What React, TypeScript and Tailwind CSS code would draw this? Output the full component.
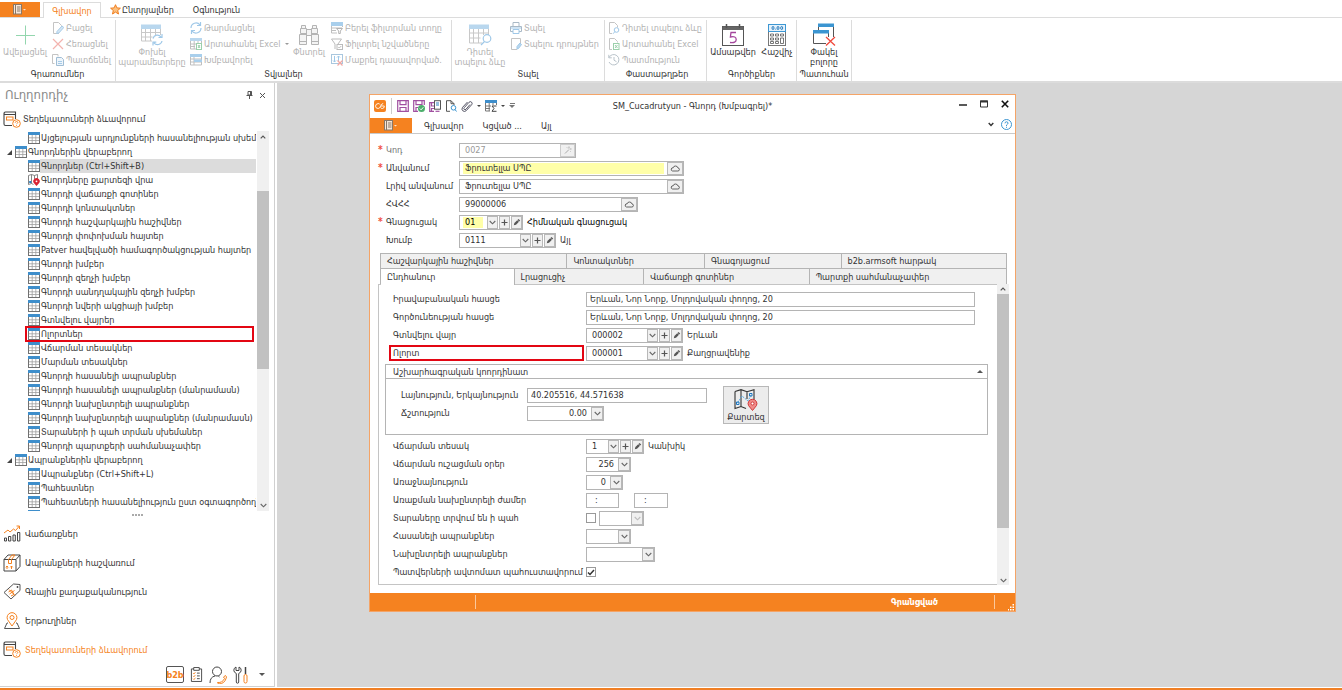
import React from "react";
import type { ReactNode } from "react";

type IconProps = { w: number; h: number; vb: string; children: ReactNode; className?: string };

function Icon({ w, h, vb, children, className = "" }: IconProps) {
  return (
    <svg width={w} height={h} viewBox={vb} fill="none" aria-hidden="true" className={"shrink-0 " + className}>
      {children}
    </svg>
  );
}

/* ---------- shared icons ---------- */

const FileMenuIcon = () => (
  <Icon w={14} h={11} vb="0 0 14 11">
    <rect x="0.5" y="0.5" width="8" height="9.5" fill="#f6e6d8" stroke="#8a7868" />
    <path d="M2.5 0.5v9.5" stroke="#8a7868" />
    <path d="M4 3h3.5M4 5h3.5M4 7h3.5" stroke="#8a7868" />
    <path d="M10 5h3l-1.500 1.500z" fill="#fde3cc" />
  </Icon>
);

const TableIcon = () => (
  <Icon w={12} h={12} vb="0 0 12 12">
    <rect x="0.5" y="0.5" width="11" height="11" fill="#fff" stroke="#707070" />
    <path d="M4.2 3v8M7.8 3v8M1 5.800h10M1 8.500h10" stroke="#a0a0a0" strokeWidth="0.8" />
    <rect x="0" y="0" width="12" height="3" fill="#3e8ecb" />
  </Icon>
);

const MapPinIcon = () => (
  <Icon w={12} h={12} vb="0 0 12 12">
    <path d="M0.5 1.5l3-1 3 1 3-1v5M0.5 1.5v9l3-1 2 1M3.5 0.5v9M6.5 1.5v4" stroke="#777" strokeWidth="0.9" />
    <rect x="1.2" y="7" width="2" height="2" fill="#2a7fc4" />
    <path d="M8.500 12l-2.500-2.700a3.200 3.200 0 1 1 5 0z" fill="#d92332" />
    <circle cx="8.500" cy="7.300" r="0.900" fill="#fff" />
  </Icon>
);

const BookIcon = () => (
  <Icon w={18} h={17} vb="0 0 18 17">
    <path d="M12.500 8V3.500H2.500Q1 3.500 1 2.300T2.500 1h10v2.500M1 2.500V13q0 1.500 1.500 1.500H9" stroke="#444" strokeWidth="1.100" />
    <rect x="3.500" y="6" width="6.500" height="3" stroke="#f58220" />
    <circle cx="13.500" cy="12.500" r="3.800" fill="#fff" stroke="#f58220" />
    <path d="M12.200 11.700q0-1.200 1.300-1.200t1.300 1q0 .7-1.300 1.400M13.500 14v.8" stroke="#f58220" strokeWidth="0.900" />
  </Icon>
);

/* ---------- ribbon icons ---------- */

const PlusBig = () => (
  <Icon w={20} h={22} vb="0 0 20 22"><path d="M10.500 1.500v19M1 11.500h19" stroke="#93d6ae" /></Icon>
);

const ChangeIcon = () => (
  <Icon w={24} h={22} vb="0 0 24 22">
    <path d="M1.500 5v12H12M20.500 5v6M5.500 5v12M10.500 5v12M15.500 5v6M1.500 8.500h19M1.500 13h11" stroke="#c8c8c8" />
    <rect x="1" y="0.500" width="20" height="4.500" fill="#b9d7ee" />
    <path d="M13 14.500a4.500 4.500 0 0 1 8-1.500M22 10v3.500h-3.500M22 17a4.500 4.500 0 0 1-8 1.800M13 21.500v-3.300h3.300" stroke="#9fc8e8" strokeWidth="1.200" />
  </Icon>
);

const FindIcon = () => (
  <Icon w={22} h={22} vb="0 0 22 22">
    <path d="M3.500 4V1.500h4V4M14.500 4V1.500h4V4M2.500 4.500h6v5h-6zM13.500 4.500h6v5h-6zM8.500 5.500h5v6h-5zM1.500 10.500h7v10h-7zM13.500 10.500h7v10h-7zM1.500 17.500h7M13.500 17.500h7" fill="#f4f4f4" stroke="#b4b4b4" />
  </Icon>
);

const PreviewIcon = () => (
  <Icon w={24} h={22} vb="0 0 24 22">
    <path d="M1.500 5v14H14M20.500 5v6M5.500 5v14M10.500 5v14M15.500 5v6M1.500 9h19M1.500 14h11" stroke="#c8c8c8" />
    <rect x="1" y="0.500" width="20" height="4.500" fill="#b9d7ee" />
    <circle cx="19" cy="14.500" r="3.800" fill="#fff" stroke="#9fc8e8" strokeWidth="1.200" />
    <path d="M16.500 17.500L13 21" stroke="#9fc8e8" strokeWidth="1.300" />
  </Icon>
);

const CalendarIcon = () => (
  <Icon w={22} h={22} vb="0 0 22 22">
    <rect x="0.500" y="2.500" width="21" height="19" fill="#fff" stroke="#555" />
    <rect x="0.500" y="2.500" width="21" height="3.500" fill="#666" />
    <path d="M4.500 0v4M17.500 0v4" stroke="#555" strokeWidth="1.500" />
    <path d="M14 8.500H9L8.400 13q5.800-1.300 5.800 2.500T8 18.500" stroke="#a4459c" strokeWidth="1.300" />
  </Icon>
);

const CalculatorIcon = () => (
  <Icon w={18} h={22} vb="0 0 18 22">
    <rect x="0.500" y="0.500" width="17" height="21" fill="#fff" stroke="#777" />
    <rect x="0.500" y="0.500" width="17" height="7" fill="#e5f2fb" stroke="#3d97d3" />
    <ellipse cx="5" cy="4" rx="1" ry="1.600" stroke="#2f7fbf" />
    <path d="M7.300 5.200h.8" stroke="#2f7fbf" />
    <ellipse cx="10" cy="4" rx="1" ry="1.600" stroke="#2f7fbf" />
    <ellipse cx="13.700" cy="4" rx="1" ry="1.600" stroke="#2f7fbf" />
    <path d="M2.500 10h3v2h-3zM7.500 10h3v2h-3zM12.500 10h3v2h-3zM2.500 14h3v2h-3zM7.500 14h3v2h-3zM12.500 14h3v5.500h-3zM2.500 17.500h3v2h-3zM7.500 17.500h3v2h-3z" stroke="#666" strokeWidth="0.900" />
  </Icon>
);

const CloseAllIcon = () => (
  <Icon w={24} h={24} vb="0 0 24 24">
    <path d="M6.500 7V1.500h15V14" stroke="#555" fill="#fff" />
    <rect x="6" y="0.500" width="16" height="3.500" fill="#3b95d1" />
    <path d="M14 20.500H1.500v-12h15V14" fill="#fff" stroke="#555" />
    <rect x="1" y="7" width="16" height="3.500" fill="#3b95d1" />
    <path d="M14 14l9 8.500M23 14l-9 8.500" stroke="#f04a3e" strokeWidth="1.300" />
  </Icon>
);

const smallIcons: Record<string, ReactNode> = {
  open: (
    <>
      <path d="M7 11.500H1.500V.5h5l3 3v2" stroke="#c4c4c4" />
      <path d="M5 9.500l5-5.500 1.800 1.500-5 5.500-2 .5z" fill="#d5e7f5" stroke="#a5cbe8" />
    </>
  ),
  remove: <path d="M1 1l10 10M11 1L1 11" stroke="#f3b3ae" strokeWidth="1.200" />,
  copy: (
    <>
      <path d="M2.500 9.500h-2V.5H6v2" stroke="#c4c4c4" />
      <path d="M4.500 3.500h5l2 2v6h-7z" fill="#eef5fb" stroke="#a0bdd4" />
      <path d="M6 7.500h4M6 9.500h4" stroke="#a5cbe8" />
    </>
  ),
  refresh: <path d="M1 6a5 5 0 0 1 9-3M10.500 0v3.500H7M11 6a5 5 0 0 1-9 3M1.500 12V8.500H5" stroke="#9fc8e8" strokeWidth="1.200" />,
  excelTable: (
    <>
      <path d="M.5 2v9H6M11.500 2v3M4.200 3v8M8 3v2M1 6h5M1 8.500h4" stroke="#bfbfbf" />
      <rect x="0" y="0" width="12" height="3" fill="#b9d7ee" />
      <rect x="6.500" y="5.500" width="5" height="6" fill="#fff" stroke="#9bd0ab" />
      <path d="M8 7l2 3M10 7L8 10" stroke="#9bd0ab" />
    </>
  ),
  group: (
    <>
      <path d="M.5 1v10h11V1M.5 5h11M.5 8h11M4 1v10" stroke="#bfbfbf" />
      <rect x="0" y="0" width="12" height="3" fill="#a9cfec" />
      <rect x="4" y="5.500" width="8" height="2.500" fill="#a9cfec" />
    </>
  ),
  filterRow: (
    <>
      <path d="M.5 2v9H6M11.500 2v3M1 6h10M1 8.500h4" stroke="#bfbfbf" />
      <rect x="0" y="0" width="12" height="4" fill="#a9cfec" />
      <path d="M5.500 6.500h6L9.300 9v2.500H7.700V9z" fill="#fff" stroke="#b4b4b4" />
    </>
  ),
  filterMark: (
    <>
      <path d="M7 6l3.500-5H.5L4 6v5" stroke="#bbb" />
      <rect x="6" y="6.500" width="5.500" height="5" fill="#fff" stroke="#bbb" />
      <path d="M7.300 9l1 1 2-2" stroke="#bbb" />
    </>
  ),
  clearSort: (
    <>
      <rect x="0.500" y="0.500" width="11" height="9" stroke="#a9c7de" />
      <path d="M3.500 2v6M2 6.500L3.500 8 5 6.500M7.500 8V2M6 3.500L7.500 2 9 3.500" stroke="#9fc8e8" />
      <path d="M6.500 6.500l5 5M11.500 6.500l-5 5" stroke="#f3a7a2" strokeWidth="1.200" />
    </>
  ),
  print: (
    <>
      <path d="M3 4V.5h6V4M3 9.500H.5v-5h11v5H9" stroke="#a9b9c6" />
      <path d="M3 7.500h6v4H3zM1 6h10" stroke="#9fc8e8" />
    </>
  ),
  printSetup: (
    <>
      <path d="M7 11.500H1.500V.5h9v5" stroke="#c4c4c4" />
      <path d="M7 11V8.500l3-3.500 1.500 1.500-3 4z" fill="#b9d7ee" stroke="#9fc8e8" />
    </>
  ),
  docView: (
    <>
      <path d="M4 11.500H1.500V.5h5l3 3v2" stroke="#c4c4c4" />
      <circle cx="8.500" cy="8" r="2.300" stroke="#9fc8e8" />
      <path d="M7 9.500L5 11.800" stroke="#9fc8e8" />
    </>
  ),
  docExcel: (
    <>
      <path d="M4 11.500H1.500V.5h5l3 3v1" stroke="#c4c4c4" />
      <rect x="5.500" y="5.500" width="5.500" height="6" fill="#fff" stroke="#9bd0ab" />
      <path d="M7 7l2.500 3M9.500 7L7 10" stroke="#9bd0ab" />
    </>
  ),
  history: (
    <>
      <path d="M1 3.500A5.200 5.200 0 1 1 1 8M.8.8v3h3" stroke="#b9c3ca" />
      <path d="M6 3v3.200l2.500 1.500" stroke="#b9c3ca" />
    </>
  ),
};

function SmallButton({ icon, label, caret }: { icon: string; label: string; caret?: boolean }) {
  return (
    <button type="button" disabled className="flex h-4 items-center gap-[2px] whitespace-nowrap text-[#b2b2b2]">
      <Icon w={12} h={12} vb="0 0 12 12">{smallIcons[icon]}</Icon>
      <span>{label}</span>
      {caret && <span className="ml-[2px] border-x-2 border-t-2 border-x-transparent border-t-[#999]" />}
    </button>
  );
}

function BigButton({ icon, lines, disabled, className = "" }: { icon: ReactNode; lines: string[]; disabled?: boolean; className?: string }) {
  return (
    <button
      type="button"
      disabled={disabled}
      className={"flex flex-col items-center whitespace-nowrap pt-[2px] leading-[10px] " + (disabled ? "text-[#b2b2b2] " : "text-[#333] ") + className}
    >
      <span className="flex h-[25px] items-center justify-center">{icon}</span>
      {lines.map((l) => <span key={l}>{l}</span>)}
    </button>
  );
}

function RibbonGroup({ label, children, className = "" }: { label: string; children: ReactNode; className?: string }) {
  return (
    <section aria-label={label} className={"mt-[2px] flex flex-col border-r border-[#dcdcdc] " + className}>
      <div className="flex h-12 items-start">{children}</div>
      <div className="h-[13px] text-center leading-[13px] text-[#333]">{label}</div>
    </section>
  );
}

function Ribbon() {
  return (
    <header className="shrink-0 bg-white">
      <nav className="flex h-[18px] items-stretch border-b border-[#dcdcdc] pt-[2px]">
        <button type="button" aria-label="Մենյու" className="flex w-10 items-center justify-center bg-[#f58220]"><FileMenuIcon /></button>
        <button type="button" className="-mb-px ml-[3px] w-[58px] border border-b-0 border-[#dcdcdc] bg-white text-[#f58220]">Գլխավոր</button>
        <button type="button" className="ml-[9px] flex items-center gap-px text-[#333]">
          <Icon w={11} h={11} vb="0 0 11 11">
            <path d="M5.500.7l1.400 3.200 3.500.3-2.700 2.300.8 3.500-3-1.900-3 1.900.8-3.500L.6 4.200l3.500-.3z" fill="#fbc07e" stroke="#f07c1c" />
          </Icon>
          Ընտրյալներ
        </button>
        <button type="button" className="ml-[19px] text-[#333]">Օգնություն</button>
      </nav>
      <div className="flex h-[65px] border-b-2 border-[#dcdcdc]">
        <RibbonGroup label="Գրառումներ" className="w-[116px]">
          <BigButton disabled icon={<PlusBig />} lines={["Ավելացնել"]} className="w-[50px]" />
          <div className="ml-[2px]">
            <SmallButton icon="open" label="Բացել" />
            <SmallButton icon="remove" label="Հեռացնել" />
            <SmallButton icon="copy" label="Պատճենել" />
          </div>
        </RibbonGroup>
        <RibbonGroup label="Տվյալներ" className="w-[336px]">
          <BigButton disabled icon={<ChangeIcon />} lines={["Փոխել", "պարամետրերը"]} className="w-[72px]" />
          <div className="ml-[2px] w-[101px]">
            <SmallButton icon="refresh" label="Թարմացնել" />
            <SmallButton icon="excelTable" label="Արտահանել Excel" caret />
            <SmallButton icon="group" label="Խմբավորել" />
          </div>
          <BigButton disabled icon={<FindIcon />} lines={["Փնտրել"]} className="w-9" />
          <div className="ml-1">
            <SmallButton icon="filterRow" label="Բերել ֆիլտրման տողը" />
            <SmallButton icon="filterMark" label="Ֆիլտրել նշվածները" />
            <SmallButton icon="clearSort" label="Մաքրել դասավորված." />
          </div>
        </RibbonGroup>
        <RibbonGroup label="Տպել" className="w-[153px]">
          <BigButton disabled icon={<PreviewIcon />} lines={["Դիտել", "տպելու ձևը"]} className="w-[56px]" />
          <div className="ml-[2px]">
            <SmallButton icon="print" label="Տպել" />
            <SmallButton icon="printSetup" label="Տպելու դրույթներ" />
          </div>
        </RibbonGroup>
        <RibbonGroup label="Փաստաթղթեր" className="w-[102px] pl-[3px]">
          <div>
            <SmallButton icon="docView" label="Դիտել տպելու ձևը" />
            <SmallButton icon="docExcel" label="Արտահանել Excel" />
            <SmallButton icon="history" label="Պատմություն" />
          </div>
        </RibbonGroup>
        <RibbonGroup label="Գործիքներ" className="w-[90px]">
          <BigButton icon={<CalendarIcon />} lines={["Ամսաթվեր"]} className="w-[52px]" />
          <BigButton icon={<CalculatorIcon />} lines={["Հաշվիչ"]} className="w-[36px]" />
        </RibbonGroup>
        <RibbonGroup label="Պատուհան" className="w-[55px]">
          <BigButton icon={<CloseAllIcon />} lines={["Փակել", "բոլորը"]} className="w-[54px]" />
        </RibbonGroup>
      </div>
    </header>
  );
}

/* ---------- navigator ---------- */

type TreeItem = { label: string; parent?: boolean; selected?: boolean; map?: boolean; marked?: boolean };

const tree: TreeItem[] = [
  { label: "Այցելության արդյունքների հասանելիության սխեմաներ" },
  { label: "Գնորդներին վերաբերող", parent: true },
  { label: "Գնորդներ (Ctrl+Shift+B)", selected: true },
  { label: "Գնորդները քարտեզի վրա", map: true },
  { label: "Գնորդի վաճառքի գոտիներ" },
  { label: "Գնորդի կոնտակտներ" },
  { label: "Գնորդի հաշվարկային հաշիվներ" },
  { label: "Գնորդի փոփոխման հայտեր" },
  { label: "Patver հավելվածի համագործակցության հայտեր" },
  { label: "Գնորդի խմբեր" },
  { label: "Գնորդի զեղչի խմբեր" },
  { label: "Գնորդի սանդղակային զեղչի խմբեր" },
  { label: "Գնորդի նվերի ակցիայի խմբեր" },
  { label: "Գտնվելու վայրեր" },
  { label: "Ոլորտներ", marked: true },
  { label: "Վճարման տեսակներ" },
  { label: "Մարման տեսակներ" },
  { label: "Գնորդի հասանելի ապրանքներ" },
  { label: "Գնորդի հասանելի ապրանքներ (մանրամասն)" },
  { label: "Գնորդի նախընտրելի ապրանքներ" },
  { label: "Գնորդի նախընտրելի ապրանքներ (մանրամասն)" },
  { label: "Տարաների ի պահ տրման սխեմաներ" },
  { label: "Գնորդի պարտքերի սահմանաչափեր" },
  { label: "Ապրանքներին վերաբերող", parent: true },
  { label: "Ապրանքներ (Ctrl+Shift+L)" },
  { label: "Պահեստներ" },
  { label: "Պահեստների հասանելիություն ըստ օգտագործողների" },
  { label: "" },
];

const ChevronUp = () => <Icon w={6} h={4} vb="0 0 6 4"><path d="M.7 3.300L3 1l2.300 2.300" stroke="#555" strokeWidth="1.200" /></Icon>;
const ChevronDown = ({ color = "#666" }: { color?: string }) => <Icon w={7} h={5} vb="0 0 7 5"><path d="M.7 1l2.800 2.800L6.300 1" stroke={color} strokeWidth="1.100" /></Icon>;

function Tree() {
  return (
    <ul className="min-w-0 flex-1 overflow-hidden">
      {tree.map((item, i) => (
        <li key={i} className={"relative flex h-[14px] items-center " + (item.parent ? "pl-[7px]" : "pl-[28px]")}>
          {item.parent && (
            <span className="mr-[3px] flex w-[5px]"><Icon w={5} h={5} vb="0 0 5 5"><path d="M5 0v5H0z" fill="#444" /></Icon></span>
          )}
          {item.map ? <MapPinIcon /> : <TableIcon />}
          <span className={"h-[14px] min-w-0 flex-1 overflow-hidden whitespace-nowrap pl-px leading-[14px] " + (item.selected ? "bg-[#dcdcdc]" : "")}>{item.label}</span>
          {item.marked && <span className="absolute -top-px left-[25px] right-[2px] h-4 border-2 border-[#e30613]" />}
        </li>
      ))}
    </ul>
  );
}

const navItems: { label: string; icon: ReactNode; active?: boolean }[] = [
  {
    label: "Վաճառքներ",
    icon: (
      <Icon w={18} h={17} vb="0 0 18 17">
        <path d="M1.500 13h2v3h-2zM5.500 11.500h2.300V16H5.500zM10 10h2.300v6H10zM14.500 7.500h2.300V16h-2.300z" stroke="#444" />
        <path d="M1 8l4-3 2 2 3.500-3 2 1.500L16.500 1M13.500 1h3v3" stroke="#f58220" />
      </Icon>
    ),
  },
  {
    label: "Ապրանքների հաշվառում",
    icon: (
      <Icon w={18} h={18} vb="0 0 18 18">
        <path d="M1 5.500L5 1h12v11.500L13 17H1zM1 5.500h12V17M13 5.500L17 1" stroke="#444" />
        <path d="M5.500 5.500L9 1h3L8.500 5.500v4h-3zM4 12v3M2.800 13.300L4 12l1.200 1.300M8.500 12v3M7.300 13.300L8.500 12l1.200 1.300" stroke="#f58220" />
      </Icon>
    ),
  },
  {
    label: "Գնային քաղաքականություն",
    icon: (
      <Icon w={18} h={17} vb="0 0 18 17">
        <path d="M1 9.500L10.500 1 17 1.500 17 7.500 8 16z" stroke="#555" />
        <circle cx="14.500" cy="4" r="0.900" fill="#444" />
        <path d="M6 6.500l6 6M5.500 9l3-2 2.500 4.500-3 1.500M6.500 11l5-3.500" stroke="#f58220" />
      </Icon>
    ),
  },
  {
    label: "Երթուղիներ",
    icon: (
      <Icon w={18} h={17} vb="0 0 18 17">
        <path d="M5 11H4l-2.500 5.500h15L14 11h-1" stroke="#555" />
        <path d="M9 14L5.500 9a4.900 4.900 0 1 1 7 0z" fill="#fff" stroke="#f58220" />
        <circle cx="9" cy="5.500" r="2" stroke="#f58220" />
      </Icon>
    ),
  },
  { label: "Տեղեկատուների ձևավորում", icon: <BookIcon />, active: true },
];

function Navigator() {
  return (
    <aside className="flex w-[275px] shrink-0 flex-col border-b border-r border-[#d0d0d0] text-[#333]">
      <div className="flex h-6 items-center pl-[5px] pr-2">
        <h1 className="flex-1 text-[13px] text-[#8a8a8a]">Ուղղորդիչ</h1>
        <button type="button" aria-label="Ամրացնել" className="mr-[6px]">
          <Icon w={7} h={8} vb="0 0 7 8"><path d="M2 .5h3.500v3.500H2zM.5 4.500h6M3.500 4.500V8" stroke="#555" /><path d="M4 .5h1.500V4H4z" fill="#555" /></Icon>
        </button>
        <button type="button" aria-label="Փակել">
          <Icon w={7} h={7} vb="0 0 7 7"><path d="M1 1l5 5M6 1L1 6" stroke="#555" /></Icon>
        </button>
      </div>
      <div className="flex h-6 items-center gap-[2px] pl-[3px]"><BookIcon /><h2>Տեղեկատուների ձևավորում</h2></div>
      <div className="flex min-h-0 flex-1 pr-[5px]">
        <Tree />
        <div className="ml-px flex w-3 flex-col items-center bg-[#f0f0f0]">
          <span className="flex h-3 items-center"><ChevronUp /></span>
          <span className="h-12 shrink-0" />
          <span className="h-[178px] w-full bg-[#c1c1c1]" />
          <span className="flex-1" />
          <span className="flex h-3 items-center"><ChevronDown /></span>
        </div>
      </div>
      <div className="flex h-2 items-center justify-center gap-px">
        <span className="size-[2px] bg-[#aaa]" /><span className="size-[2px] bg-[#aaa]" /><span className="size-[2px] bg-[#aaa]" /><span className="size-[2px] bg-[#aaa]" />
      </div>
      <nav>
        {navItems.map((n) => (
          <a key={n.label} href="#" className={"flex h-[29px] items-center gap-1 pl-[3px] " + (n.active ? "text-[#f58220]" : "text-[#333]")}>
            {n.icon}
            {n.label}
          </a>
        ))}
      </nav>
      <div className="flex h-[22px] items-center justify-end gap-[6px] pb-px pr-1">
        <button type="button" className="flex h-[17px] w-[18px] items-center justify-center rounded-[2px] border border-[#555] text-[9px] font-bold text-[#f58220]">b2b</button>
        <button type="button" aria-label="Առաջադրանքներ">
          <Icon w={13} h={17} vb="0 0 14 17">
            <path d="M4 2.500H1.500v13.500h11V2.500H10M4 1h6v3H4zM7.500 7h3M7.500 10h3M7.500 13h3" stroke="#444" />
            <path d="M3.300 7l1 1 1.500-2M3.300 10l1 1 1.500-2M3.300 13l1 1 1.500-2" stroke="#f58220" strokeWidth="0.900" />
          </Icon>
        </button>
        <button type="button" aria-label="Հաճախորդներ">
          <Icon w={18} h={18} vb="0 0 18 18">
            <circle cx="8" cy="5.500" r="4.500" stroke="#444" />
            <path d="M1 17q0-6 5-7M9.500 10.500l1 .5" stroke="#444" />
            <path d="M8.500 16.500q5 .5 7-4l-1-1.500 2-1.500 1 1.500q-1.500 7-8 7z" stroke="#f58220" />
          </Icon>
        </button>
        <button type="button" aria-label="Գործիքներ">
          <Icon w={15} h={18} vb="0 0 15 18">
            <path d="M3 1Q.8 2 .8 4.200T3.300 7.500v8.500a1.200 1.200 0 0 0 2.400 0V7.500Q8.200 6.500 8.200 4.200T6 1v3.500H3z" stroke="#444" />
            <path d="M12.500 1v7" stroke="#444" strokeWidth="1.500" />
            <rect x="11" y="8.500" width="3" height="8.500" rx="1.500" stroke="#f58220" />
          </Icon>
        </button>
        <button type="button" aria-label="Ավելին" className="flex w-4 justify-center">
          <span className="border-x-3 border-t-3 border-x-transparent border-t-[#555]" />
        </button>
      </div>
    </aside>
  );
}

/* ---------- form controls ---------- */

const fieldBox = "flex h-[15px] border border-[#b4b4b4] bg-white ";
const inputBase = "min-w-0 flex-1 outline-none ";
const miniButton = "flex w-[11px] shrink-0 items-center justify-center border border-[#b8b8b8] bg-[#f0f0f0] ";

const CloudIcon = () => (
  <Icon w={10} h={7} vb="0 0 10 7"><path d="M2.500 6h5.300a1.500 1.500 0 0 0 .2-3Q7.500 1 5.500 1T3.200 2.800A1.600 1.600 0 0 0 2.500 6z" stroke="#555" strokeWidth="0.900" /></Icon>
);

function TextField({ id, value, className = "", yellow, cloud }: { id: string; value: string; className?: string; yellow?: boolean; cloud?: boolean }) {
  return (
    <div className={fieldBox + className}>
      <input id={id} defaultValue={value} className={inputBase + (cloud ? "ml-[3px] pl-[2px] " : "pl-[3px] ") + (yellow ? "my-px mr-[3px] bg-[#ffffa8]" : "")} />
      {cloud && <button type="button" aria-label="Ամպ" className="flex w-4 shrink-0 items-center justify-center border border-[#b8b8b8] bg-[#f0f0f0]"><CloudIcon /></button>}
    </div>
  );
}

function Lookup({ id, value, className = "", yellow, text }: { id: string; value: string; className?: string; yellow?: boolean; text: string }) {
  return (
    <div className="flex items-center">
      <div className={fieldBox + className}>
        <input id={id} defaultValue={value} className={inputBase + "my-px ml-[3px] mr-1 pl-[2px] " + (yellow ? "bg-[#ffffa8]" : "")} />
        <div className="flex gap-px">
          <button type="button" aria-label="Ընտրել" className={miniButton}><ChevronDown /></button>
          <button type="button" aria-label="Ավելացնել" className={miniButton}>
            <Icon w={7} h={7} vb="0 0 7 7"><path d="M3.500.5v6M.5 3.500h6" stroke="#555" strokeWidth="1.200" /></Icon>
          </button>
          <button type="button" aria-label="Խմբագրել" className={miniButton}>
            <Icon w={8} h={8} vb="0 0 8 8"><path d="M.8 7.200l.6-2.200L5.500.9l1.700 1.700L3 6.700z" fill="#555" /><path d="M4.300 2l1.800 1.800" stroke="#f0f0f0" strokeWidth="0.600" /></Icon>
          </button>
        </div>
      </div>
      <span className="whitespace-nowrap pl-1">{text}</span>
    </div>
  );
}

function SelectField({ id, value, className = "", disabled, label }: { id: string; value: string; className?: string; disabled?: boolean; label?: string }) {
  return (
    <div className={fieldBox + "relative " + className}>
      <select id={id} aria-label={label} disabled={disabled} className="w-full appearance-none bg-transparent pr-4 outline-none [text-align-last:right]">
        <option>{value}</option>
      </select>
      <span className="pointer-events-none absolute inset-y-0 right-0 flex w-[12px] items-center justify-center border border-[#b8b8b8] bg-[#f0f0f0]">
        <ChevronDown color={disabled ? "#bbb" : "#666"} />
      </span>
    </div>
  );
}

function HeadRow({ id, label, required, muted, children }: { id: string; label: string; required?: boolean; muted?: boolean; children: ReactNode }) {
  return (
    <div className="flex h-[18px] items-center">
      <span className="w-2 text-[10px] font-bold text-[#f0523f]">{required ? "*" : ""}</span>
      <label htmlFor={id} className={"w-[73px] shrink-0 whitespace-nowrap " + (muted ? "text-[#777]" : "")}>{label}</label>
      {children}
    </div>
  );
}

function Row({ id, label, children, marked }: { id: string; label: string; children: ReactNode; marked?: boolean }) {
  return (
    <div className="relative flex h-[18px] items-center">
      {marked && <span className="absolute inset-y-px -left-1 w-[195px] border-2 border-[#e30613]" />}
      <label htmlFor={id} className="w-[193px] shrink-0 whitespace-nowrap">{label}</label>
      {children}
    </div>
  );
}

/* ---------- customer window ---------- */

function TitleBar() {
  return (
    <div className="grid h-[21px] grid-cols-[1fr_auto_1fr] items-center">
      <div className="flex items-center gap-1 pl-1">
        <Icon w={12} h={12} vb="0 0 12 12">
          <rect width="12" height="12" rx="2" fill="#f58220" />
          <path d="M6 4.500Q5.500 3.500 4.200 3.500 1.500 4 1.500 6.200T4.200 8.500q1.500 0 2.500-2.500T9.200 3.500M6.800 6h3.500v.5Q10 8.500 8.500 8.500T6.500 7.500" stroke="#fff" strokeWidth="0.900" />
        </Icon>
        <span className="mx-px h-4 w-px bg-[#ccc]" />
        <button type="button" aria-label="Պահպանել">
          <Icon w={12} h={12} vb="0 0 12 12"><path d="M.7.700h10.600v10.600H.7zM3 .7v4h6v-4M3 11V7.500h6V11" stroke="#a050a0" strokeWidth="1.200" /></Icon>
        </button>
        <button type="button" aria-label="Պահպանել և հաստատել">
          <Icon w={12} h={12} vb="0 0 12 12"><path d="M5 11.300H.7V.700h10.600V5M3 .7v4h6v-4M3 11V7.500h2" stroke="#a050a0" strokeWidth="1.200" /><circle cx="8.500" cy="8.500" r="3.500" fill="#4caf6b" /><path d="M6.800 8.500l1.300 1.300 2.200-2.500" stroke="#fff" /></Icon>
        </button>
        <button type="button" aria-label="Պահպանել և փակել">
          <Icon w={12} h={12} vb="0 0 12 12"><path d="M5 11.300H.7V2.700H5M2.500 3v3H5M2.500 11V8.500H5" stroke="#a050a0" strokeWidth="1.200" /><rect x="5.500" y="0.700" width="6" height="8.500" fill="#fff" stroke="#555" /><path d="M7 3h3M7 5h3" stroke="#2f7fbf" /><path d="M6.500 11.300h4" stroke="#a050a0" strokeWidth="1.200" /></Icon>
        </button>
        <button type="button" aria-label="Դիտել">
          <Icon w={12} h={12} vb="0 0 12 12"><path d="M5 11.300H1.500V.7h4.500l3 3V5M6 .7v3h3" stroke="#555" /><circle cx="8.500" cy="7.800" r="2.300" fill="#fff" stroke="#3b95d1" /><path d="M10 9.500l1.500 2" stroke="#3b95d1" /></Icon>
        </button>
        <button type="button" aria-label="Կցել" className="flex items-center gap-1">
          <Icon w={12} h={12} vb="0 0 12 12"><path d="M9 4.500L5 9.200q-1 1-1.800.2T3.300 7.600L8 2.300q1.300-1.300 2.500-.2t.2 2.600l-5.500 6Q3.500 12.200 1.800 10.800T1.600 7.300L6.500 2" stroke="#556" /></Icon>
          <span className="border-x-2 border-t-2 border-x-transparent border-t-[#444]" />
        </button>
        <button type="button" aria-label="Աղյուսակ" className="flex items-center gap-1">
          <Icon w={12} h={12} vb="0 0 12 12"><path d="M.5 2v9H5M11.500 2v3M4.200 3v8M8 3v2M1 6h5M1 8.500h4" stroke="#777" /><rect width="12" height="3" fill="#3e8ecb" /><path d="M11.500 6H7l2 2.500L7 11.300h4.500" stroke="#444" /></Icon>
          <span className="border-x-2 border-t-2 border-x-transparent border-t-[#444]" />
        </button>
        <button type="button" aria-label="Կարգավորել" className="flex flex-col items-center gap-px">
          <span className="h-px w-[5px] bg-[#777]" />
          <span className="border-x-3 border-t-3 border-x-transparent border-t-[#777]" />
        </button>
      </div>
      <h2 className="whitespace-nowrap">SM_Cucadrutyun - Գնորդ (Խմբագրել)*</h2>
      <div className="flex items-center justify-end gap-[13px] pb-[4px] pr-[6px]">
        <button type="button" aria-label="Ծալել"><Icon w={8} h={8} vb="0 0 8 8"><path d="M0 5h8" stroke="#222" strokeWidth="1.500" /></Icon></button>
        <button type="button" aria-label="Մեծացնել"><Icon w={8} h={8} vb="0 0 8 8"><path d="M.5 1h7v6h-7z" stroke="#333" /><path d="M0 1.500h8" stroke="#333" strokeWidth="2" /></Icon></button>
        <button type="button" aria-label="Փակել"><Icon w={8} h={8} vb="0 0 8 8"><path d="M.8.8l6.400 6.400M7.200.8L.8 7.200" stroke="#111" strokeWidth="1.600" /></Icon></button>
      </div>
    </div>
  );
}

const backTab = "border-r border-t border-[#b4b4b4] bg-[#f0f0f0] pl-[6px] text-left ";

function CustomerWindow() {
  return (
    <section aria-label="Գնորդ" className="absolute left-[92px] top-[11px] flex w-[647px] flex-col border border-[#f4a467] bg-white text-[#333]">
      <TitleBar />
      <div className="flex h-[18px] items-stretch border-b border-[#c9c9c9] pt-[2px]">
        <button type="button" aria-label="Մենյու" className="flex w-[42px] items-center justify-center bg-[#f58220]"><FileMenuIcon /></button>
        <button type="button" className="ml-[12px]">Գլխավոր</button>
        <button type="button" className="ml-[19px]">Կցված ...</button>
        <button type="button" className="ml-[19px]">Այլ</button>
        <span className="flex-1" />
        <div className="flex items-center gap-[7px] pb-[3px] pr-[3px]">
          <button type="button" aria-label="Ծալել ժապավենը"><Icon w={6} h={5} vb="0 0 6 5"><path d="M.7 1L3 3.500 5.300 1" stroke="#333" strokeWidth="1.400" /></Icon></button>
          <button type="button" aria-label="Օգնություն">
            <Icon w={11} h={11} vb="0 0 11 11"><circle cx="5.500" cy="5.500" r="5" stroke="#3b95d1" /><path d="M4 4.300Q4 2.800 5.500 2.800T7 4.200q0 .8-1.500 1.800V7M5.500 7.800v1" stroke="#3b95d1" /></Icon>
          </button>
        </div>
      </div>

      <form className="flex flex-col px-2 pt-[7px]">
        <HeadRow id="code" label="Կոդ" required muted>
          <div className={fieldBox + "w-[117px]"}>
            <input id="code" defaultValue="0027" disabled className={inputBase + "pl-[5px] text-[#999]"} />
            <button type="button" disabled aria-label="Լրացնել" className="flex w-[15px] items-center justify-center border border-[#ccc] bg-[#f0f0f0]">
              <Icon w={8} h={8} vb="0 0 8 8"><path d="M1 7.500l4-4M5 .5v2M7.500 3H6M3 1.500l.7.7M6.500 5.500L7 6" stroke="#aaa" /></Icon>
            </button>
          </div>
        </HeadRow>
        <HeadRow id="name" label="Անվանում" required><TextField id="name" value="Ֆրուտելլա ՍՊԸ" yellow cloud className="w-[225px]" /></HeadRow>
        <HeadRow id="fullname" label="Լրիվ անվանում"><TextField id="fullname" value="Ֆրուտելլա ՍՊԸ" cloud className="w-[225px]" /></HeadRow>
        <HeadRow id="tin" label="ՀՎՀՀ"><TextField id="tin" value="99000006" cloud className="w-[179px]" /></HeadRow>
        <HeadRow id="pricelist" label="Գնացուցակ" required>
          <div className="text-black"><Lookup id="pricelist" value="01" yellow text="Հիմնական գնացուցակ" className="w-[64px]" /></div>
        </HeadRow>
        <HeadRow id="group" label="Խումբ"><Lookup id="group" value="0111" text="Այլ" className="w-[97px]" /></HeadRow>
      </form>

      <div className="mt-1 flex flex-col px-[8px] pl-[10px]" role="tablist">
        <div className="grid h-[15px] grid-cols-[187fr_138fr_137fr_166fr] border-l border-[#b4b4b4]">
          <button type="button" role="tab" className={backTab}>Հաշվարկային հաշիվներ</button>
          <button type="button" role="tab" className={backTab}>Կոնտակտներ</button>
          <button type="button" role="tab" className={backTab}>Գնագոյացում</button>
          <button type="button" role="tab" className={backTab}>b2b.armsoft հարթակ</button>
        </div>
        <div className="grid h-4 grid-cols-[134fr_130fr_166fr_198fr] border-l border-[#b4b4b4]">
          <button type="button" role="tab" aria-selected="true" className="relative -mb-px border-r border-t border-[#b4b4b4] bg-white pl-[6px] text-left">Ընդհանուր</button>
          <button type="button" role="tab" className={backTab}>Լրացուցիչ</button>
          <button type="button" role="tab" className={backTab}>Վաճառքի գոտիներ</button>
          <button type="button" role="tab" className={backTab}>Պարտքի սահմանաչափեր</button>
        </div>
      </div>

      <div className="mb-2 ml-2 mr-[6px] flex">
        <div className="min-w-0 flex-1 border border-r-0 border-[#c4c4c4] pb-[3px]" role="tabpanel">
          <div className="flex flex-col px-[14px] pr-[22px] pt-[5px]">
            <Row id="legal" label="Իրավաբանական հասցե"><TextField id="legal" value="Երևան, Նոր Նորք, Մոլդովական փողոց, 20" className="flex-1" /></Row>
            <Row id="actual" label="Գործունեության հասցե"><TextField id="actual" value="Երևան, Նոր Նորք, Մոլդովական փողոց, 20" className="flex-1" /></Row>
            <Row id="place" label="Գտնվելու վայր"><Lookup id="place" value="000002" text="Երևան" className="w-[97px]" /></Row>
            <Row id="area" label="Ոլորտ" marked><Lookup id="area" value="000001" text="Քաղցրավենիք" className="w-[97px]" /></Row>
          </div>
          <fieldset className="ml-[6px] mr-[9px] mt-[2px] border border-[#b4b4b4]">
            <div className="flex h-[14px] items-center justify-between border-b border-[#b4b4b4] pl-[7px] pr-1">
              <span>Աշխարհագրական կոորդինատ</span>
              <span className="border-x-3 border-b-3 border-x-transparent border-b-[#555]" />
            </div>
            <div className="flex h-[55px] items-start pl-[15px] pt-[7px]">
              <div className="flex flex-col">
                <div className="flex h-[18px] items-center">
                  <label htmlFor="coords" className="w-[126px] shrink-0 whitespace-nowrap">Լայնություն, Երկայնություն</label>
                  <TextField id="coords" value="40.205516, 44.571638" className="w-[180px]" />
                </div>
                <div className="flex h-[18px] items-center">
                  <label htmlFor="accuracy" className="w-[126px] shrink-0 whitespace-nowrap">Ճշտություն</label>
                  <SelectField id="accuracy" value="0.00" className="w-[77px]" />
                </div>
              </div>
              <button type="button" className="ml-4 flex h-[38px] w-[46px] flex-col items-center justify-between border border-[#b8b8b8] bg-[#ececec] pt-[2px]">
                <Icon w={24} h={22} vb="0 0 24 22">
                  <path d="M1 2.500L7 .7l6 2 7-2v10M1 2.500v17l6-2 5 2M7 .7v17M13 2.700V10" fill="none" stroke="#333" strokeWidth="1.100" />
                  <path d="M3.500 14L8 7l6 5 3-6" stroke="#57a8df" strokeDasharray="2 1" />
                  <path d="M2.500 13h2.500v2.500H2.500zM15.500 4.500H18V7h-2.500z" stroke="#1f78c1" />
                  <path d="M18.500 21.500l-4-5a4.400 4.400 0 1 1 8 0z" fill="#f08a88" stroke="#cf3a3a" />
                  <circle cx="18.500" cy="14.500" r="1.500" fill="#fff" stroke="#cf3a3a" />
                </Icon>
                <span className="leading-[12px]">Քարտեզ</span>
              </button>
            </div>
          </fieldset>
          <div className="flex flex-col pl-[14px] pt-[2px]">
            <Row id="paytype" label="Վճարման տեսակ"><Lookup id="paytype" value="1" text="Կանխիկ" className="w-[58px]" /></Row>
            <Row id="delay" label="Վճարման ուշացման օրեր"><SelectField id="delay" value="256" className="w-[45px]" /></Row>
            <Row id="priority" label="Առաջնայնություն"><SelectField id="priority" value="0" className="w-[37px]" /></Row>
            <Row id="timefrom" label="Առաքման նախընտրելի ժամեր">
              <div className={fieldBox + "w-[33px]"}><input id="timefrom" defaultValue=":" className={inputBase + "pl-2"} /></div>
              <div className={fieldBox + "ml-[15px] w-[34px]"}><input aria-label="Մինչև" defaultValue=":" className={inputBase + "pl-[9px]"} /></div>
            </Row>
            <Row id="tare" label="Տարաները տրվում են ի պահ">
              <input id="tare" type="checkbox" className="mr-[3px] size-[10px] appearance-none border border-[#999] bg-white" />
              <SelectField id="tarescheme" label="Տարաների սխեմա" value="" disabled className="w-[45px]" />
            </Row>
            <Row id="avail" label="Հասանելի ապրանքներ"><SelectField id="avail" value="" className="w-[45px]" /></Row>
            <Row id="prefer" label="Նախընտրելի ապրանքներ"><SelectField id="prefer" value="" className="w-[69px]" /></Row>
            <Row id="reserve" label="Պատվերների ավտոմատ պահուստավորում">
              <div className="relative flex">
                <input id="reserve" type="checkbox" defaultChecked className="peer size-[10px] appearance-none border border-[#999] bg-white" />
                <span className="pointer-events-none absolute inset-0 hidden items-center justify-center peer-checked:flex">
                  <Icon w={8} h={7} vb="0 0 8 7"><path d="M1 3.500l2 2L7 1" stroke="#333" strokeWidth="1.500" /></Icon>
                </span>
              </div>
            </Row>
          </div>
        </div>
        <div className="flex w-3 flex-col items-center bg-[#f0f0f0]">
          <span className="flex h-[10px] shrink-0 items-center"><ChevronUp /></span>
          <span className="w-full flex-[233] bg-[#c1c1c1]" />
          <span className="flex-[47]" />
          <span className="flex h-[10px] shrink-0 items-center"><ChevronDown /></span>
        </div>
      </div>

      <footer className="flex h-[18px] items-center bg-[#f58220] text-white">
        <span className="w-[105px]" />
        <span className="h-[14px] w-px bg-[#fbc89b]" />
        <span className="flex-1" />
        <span className="pr-[56px] font-bold">Գրանցված</span>
        <span className="h-[14px] w-px bg-[#fbc89b]" />
        <span className="flex w-5 items-end justify-end self-stretch">
          <Icon w={7} h={7} vb="0 0 7 7"><path d="M4.500 0H6v1.500H4.500zM4.500 2.500H6V4H4.500zM4.500 5H6v1.500H4.500zM2 2.500h1.500V4H2zM2 5h1.500v1.500H2zM0 5h1v1.500H0z" fill="#fff" /></Icon>
        </span>
      </footer>
    </section>
  );
}

export default function App() {
  return (
    <div className="flex h-screen flex-col overflow-hidden bg-white font-['DejaVu_Sans_Condensed','DejaVu_Sans',sans-serif] text-[9px] leading-[12px]">
      <Ribbon />
      <div className="flex min-h-0 flex-1 pb-px">
        <Navigator />
        <main className="relative ml-[2px] min-w-0 flex-1 bg-[#d6d6d6]">
          <CustomerWindow />
        </main>
      </div>
      <div className="h-[2px] shrink-0 bg-[#f07f24]" />
    </div>
  );
}
